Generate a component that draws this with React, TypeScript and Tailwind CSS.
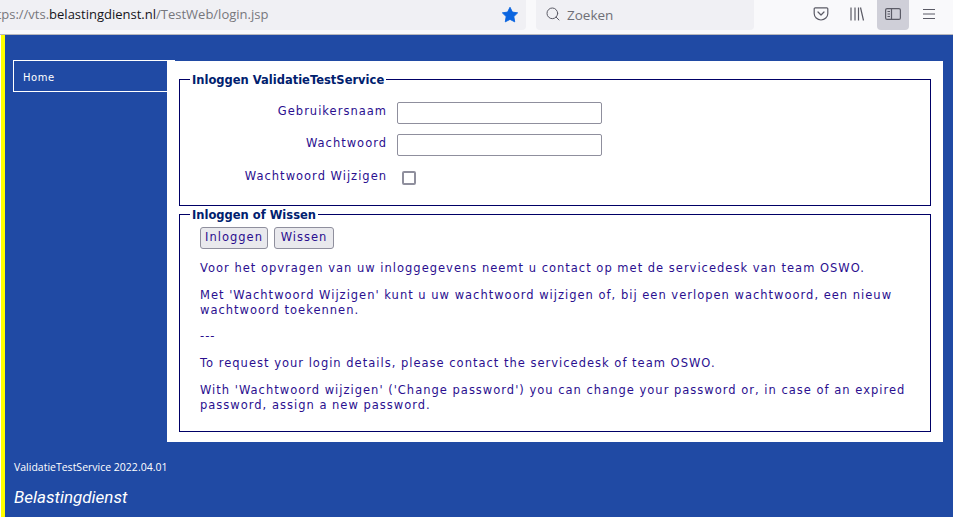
import { Search } from "lucide-react";

const font = "font-['DejaVu_Sans',sans-serif]";

function Toolbar() {
  return (
    <div className="flex h-[35px] border-b border-[#b8b8bc] bg-[#f9f9fb] font-['Open_Sans',sans-serif]">
      <div className="flex h-[30px] w-[526px] items-center overflow-hidden rounded-br-[4px] bg-[#f0f0f4]">
        <div className="ml-[-8px] flex-1 whitespace-nowrap text-[13px] text-[#77777c]">
          ttps://vts.<span className="text-[#15141a]">belastingdienst.nl</span>/TestWeb/login.jsp
        </div>
        <svg viewBox="0 0 16 16" className="mb-[1px] mr-[7px] h-[18px] w-[18px]">
          <path
            fill="#0b65e0"
            strokeLinejoin="round"
            stroke="#0b65e0"
            strokeWidth="0.8"
            d="M8 1.100l2.100 4.300 4.700.7-3.400 3.300.8 4.700L8 11.900l-4.200 2.200.8-4.700L1.200 6.100l4.700-.7z"
          />
        </svg>
      </div>
      <div className="ml-[10px] flex h-[30px] w-[218px] items-center rounded-b-[4px] bg-[#f0f0f4] pl-[9px]">
        <Search size={16} strokeWidth={1.5} className="mb-[2px] text-[#5b5b66]" />
        <span className="ml-[6px] text-[13.5px] text-[#6f6f76]">Zoeken</span>
      </div>
      <div className="ml-[59px] flex h-[30px] items-center text-[#5b5b66]">
        <svg viewBox="0 0 16 16" className="mb-[2px] h-[16px] w-[16px]" fill="none" stroke="currentColor" strokeWidth="1.2">
          <path d="M2.200 1.800h11.600c.6 0 1 .4 1 1v4.600c0 3.600-3 6.600-6.800 6.600S1.200 11 1.200 7.400V2.800c0-.6.4-1 1-1z" />
          <path d="M5 6l3 3 3-3" strokeLinecap="round" strokeLinejoin="round" />
        </svg>
        <svg viewBox="0 0 16 16" className="mb-[2px] ml-[20px] h-[16px] w-[16px]" fill="none" stroke="currentColor" strokeWidth="1.2">
          <path d="M2 1.500v13M6 1.500v13M9.500 1.500v13M11.500 1.500l3 13" />
        </svg>
        <div className="ml-[12px] flex h-[30px] w-[32px] items-center justify-center rounded-b-[4px] bg-[#cfcfd8]">
          <svg viewBox="0 0 16 16" className="mb-[2px] h-[16px] w-[16px]" fill="none" stroke="currentColor" strokeWidth="1.2">
            <rect x="0.600" y="2.600" width="14.800" height="10.800" rx="1.500" />
            <path d="M6.500 2.600v10.800M2.500 5.500h2.500M2.500 8h2.500M2.500 10.500h2.500" />
          </svg>
        </div>
        <svg viewBox="0 0 16 16" className="mb-[2px] ml-[12px] h-[16px] w-[16px]" fill="none" stroke="currentColor" strokeWidth="1.2">
          <path d="M2 3.500h12M2 8h12M2 12.500h12" />
        </svg>
      </div>
    </div>
  );
}

function Label({ children }: { children: string }) {
  return <div className="mb-[3px] w-[199px] text-right">{children}</div>;
}

function TextField() {
  return <input type="text" className="ml-[10px] h-[22px] w-[205px] rounded-[2px] border border-[#8f8f9d] bg-white" />;
}

function Legend({ children }: { children: string }) {
  return (
    <legend className="relative top-[1px] ml-[2px] px-[2px] text-[11.5px] font-bold leading-[17px] tracking-normal text-[#00206e]">
      {children}
    </legend>
  );
}

export default function App() {
  return (
    <div className={`h-[517px] w-[953px] overflow-hidden bg-white ${font}`}>
      <Toolbar />
      <div className="ml-[1px] flex h-[482px] border-l-[4px] border-[#ffff00] bg-[#204aa4] pl-[8px] pt-[25px]">
        <div className="relative z-10 w-[154px]">
          <div className="flex h-[32px] w-[162px] items-center border-y border-l border-white pl-[9px] pt-[2px] text-[10px] tracking-[0.5px] text-white">
            Home
          </div>
          <div className="ml-[1px] mt-[369px] whitespace-nowrap font-['Open_Sans',sans-serif] text-[10.5px] leading-[13px] text-white">
            ValidatieTestService 2022.04.01
          </div>
          <div className="ml-[1px] mt-[13px] font-['Roboto',sans-serif] text-[17px] italic leading-[20px] text-white">
            Belastingdienst
          </div>
        </div>
        <div className="mt-[1px] h-[381px] w-[776px] bg-white px-[12px] pt-[10px] text-[11.5px] tracking-[1px] text-[#2b0f8f]">
          <fieldset className="h-[135px] border border-[#000066] pl-[8px]">
            <Legend>Inloggen ValidatieTestService</Legend>
            <div className="mt-[14px] flex items-center">
              <Label>Gebruikersnaam</Label>
              <TextField />
            </div>
            <div className="mt-[10px] flex items-center">
              <Label>Wachtwoord</Label>
              <TextField />
            </div>
            <div className="mt-[12px] flex items-center">
              <Label>Wachtwoord Wijzigen</Label>
              <span className="mb-[1px] ml-[15px] block h-[14px] w-[14px] rounded-[2px] border-2 border-[#8f8f9d] bg-white" />
            </div>
          </fieldset>
          <fieldset className="h-[226px] border border-[#000066] pl-[8px] pr-[16px]">
            <Legend>Inloggen of Wissen</Legend>
            <div className="pl-[12px]">
              <div className="mt-[4px] flex gap-[6px]">
                <button className="h-[22px] w-[68px] rounded-[3px] border border-[#8f8f9d] bg-[#e9e9ed] text-[11.5px] tracking-[1px] text-[#2b0f8f]">
                  Inloggen
                </button>
                <button className="h-[22px] w-[60px] rounded-[3px] border border-[#8f8f9d] bg-[#e9e9ed] text-[11.5px] tracking-[1px] text-[#2b0f8f]">
                  Wissen
                </button>
              </div>
              <div className="leading-[15px]">
                <p className="mt-[12px]">
                  Voor het opvragen van uw inloggegevens neemt u contact op met de servicedesk van team OSWO.
                </p>
                <p className="mt-[12px]">
                  Met 'Wachtwoord Wijzigen' kunt u uw wachtwoord wijzigen of, bij een verlopen wachtwoord, een nieuw wachtwoord toekennen.
                </p>
                <p className="mt-[11px]">---</p>
                <p className="mt-[12px]">To request your login details, please contact the servicedesk of team OSWO.</p>
                <p className="mt-[12px]">
                  With 'Wachtwoord wijzigen' ('Change password') you can change your password or, in case of an expired password, assign a new password.
                </p>
              </div>
            </div>
          </fieldset>
        </div>
      </div>
    </div>
  );
}
